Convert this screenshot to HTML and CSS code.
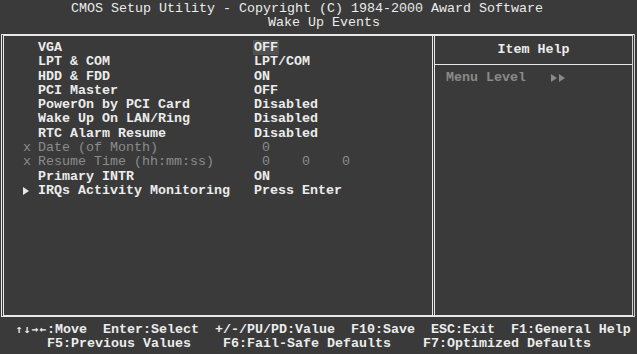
FILE: index.html
```html
<!DOCTYPE html>
<html lang="en">

<head>
    <meta charset="UTF-8">
    <meta name="viewport" content="width=device-width, initial-scale=1.0">
    <title>Wake Up Events</title>
    <link rel="stylesheet" href="styles.css">
</head>

<body>
    <div class="screen">
        <div class="title">
            <div class="title-main">CMOS Setup Utility - Copyright (C) 1984-2000 Award Software</div>
            <div class="title-sub">Wake Up Events</div>
        </div>

        <div class="frame">
            <div class="items">
                <div class="row"><span class="mark"></span><span class="label">VGA</span><span class="value"><span class="sel">OFF</span></span></div>
                <div class="row"><span class="mark"></span><span class="label">LPT &amp; COM</span><span class="value">LPT/COM</span></div>
                <div class="row"><span class="mark"></span><span class="label">HDD &amp; FDD</span><span class="value">ON</span></div>
                <div class="row"><span class="mark"></span><span class="label">PCI Master</span><span class="value">OFF</span></div>
                <div class="row"><span class="mark"></span><span class="label">PowerOn by PCI Card</span><span class="value">Disabled</span></div>
                <div class="row"><span class="mark"></span><span class="label">Wake Up On LAN/Ring</span><span class="value">Disabled</span></div>
                <div class="row"><span class="mark"></span><span class="label">RTC Alarm Resume</span><span class="value">Disabled</span></div>
                <div class="row off"><span class="mark">x</span><span class="label">Date (of Month)</span><span class="value"> 0</span></div>
                <div class="row off"><span class="mark">x</span><span class="label">Resume Time (hh:mm:ss)</span><span class="value"> 0    0    0</span></div>
                <div class="row"><span class="mark"></span><span class="label">Primary INTR</span><span class="value">ON</span></div>
                <div class="row"><span class="mark"><svg class="tri" width="6" height="8" viewBox="0 0 6 8"><path d="M0 0 L6 4 L0 8 Z" fill="#e8e8e8"/></svg></span><span class="label">IRQs Activity Monitoring</span><span class="value">Press Enter</span></div>
            </div>

            <div class="help">
                <div class="help-head">Item Help</div>
                <div class="help-body">
                    <span>Menu Level</span>
                    <svg class="level" width="16" height="8" viewBox="0 0 16 8"><path d="M0 0 L6 4 L0 8 Z M8 0 L14 4 L8 8 Z" fill="#8a8a8a"/></svg>
                </div>
            </div>
        </div>

        <div class="keys">
            <div class="keys-one"><span class="arrow">↑</span><span class="arrow">↓</span><span class="arrow">→</span><span class="arrow">←</span>:Move  Enter:Select  +/-/PU/PD:Value  F10:Save  ESC:Exit  F1:General Help</div>
            <div class="keys-two">F5:Previous Values    F6:Fail-Safe Defaults    F7:Optimized Defaults</div>
        </div>
    </div>
</body>

</html>
```

FILE: styles.css
```css
body {
    margin: 0;
    padding: 0;
    background-color: #3a3a3a;
    color: #ececec;
    font-family: "Liberation Mono", "DejaVu Sans Mono", monospace;
    font-size: 13.33px;
}

.screen {
    width: 637px;
    height: 354px;
    display: flex;
    flex-direction: column;
    overflow: hidden;
}

.title {
    height: 34px;
    padding-top: 2px;
    box-sizing: border-box;
    line-height: 14px;
}

.title-main {
    padding-left: 71px;
    white-space: pre;
}

.title-sub {
    padding-left: 268px;
    white-space: pre;
}

/* main box with the double side lines */
.frame {
    display: flex;
    height: 283px;
    margin: 0 2px 0 1px;
    border-top: 2px solid #e8e8e8;
    border-bottom: 2px solid #e8e8e8;
    border-left: 3px double #e8e8e8;
    border-right: 3px double #d0d0d0;
    box-sizing: border-box;
}

.items {
    width: 428px;
    padding: 5px 0 0 18px;
    box-sizing: border-box;
    font-weight: bold;
}

.row {
    display: grid;
    grid-template-columns: 16px 216px auto;
    line-height: 14.3px;
    white-space: pre;
}

.row.off {
    color: #8c8c8c;
    font-weight: normal;
}

.mark {
    display: flex;
    align-items: center;
    padding-left: 1px;
}

.sel {
    background-color: #505050;
    padding: 0 1px;
    margin-left: -1px;
}

.help {
    flex: 1;
    border-left: 3px double #e8e8e8;
    display: flex;
    flex-direction: column;
}

.help-head {
    height: 28px;
    border-bottom: 1px solid #e8e8e8;
    text-align: center;
    line-height: 28px;
    font-weight: bold;
}

.help-body {
    display: flex;
    align-items: center;
    padding: 6px 0 0 11px;
    line-height: 14px;
    color: #8a8a8a;
    font-weight: bold;
}

.level {
    margin-left: 25px;
}

.keys {
    flex: 1;
    padding-top: 6px;
    line-height: 14px;
    font-weight: bold;
}

.keys-one {
    padding-left: 15px;
    white-space: pre;
}

.keys-two {
    padding-left: 47px;
    white-space: pre;
}

.arrow {
    display: inline-block;
    width: 8px;
    text-align: center;
    font-family: "DejaVu Sans Mono", monospace;
    font-size: 11px;
}
```
